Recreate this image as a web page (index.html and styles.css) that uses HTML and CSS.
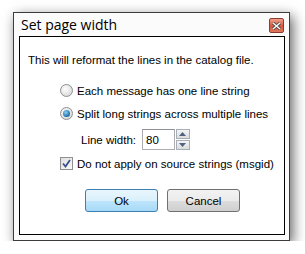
FILE: index.html
```html
<!DOCTYPE html>
<html lang="en">
<head>
    <meta charset="UTF-8">
    <title>Set page width</title>
    <link rel="stylesheet" href="styles.css">
</head>
<body>
    <div class="window">
        <div class="titlebar">
            <span class="title">Set page width</span>
            <span class="close-btn">
                <svg width="9" height="8" viewBox="0 0 9 8">
                    <path d="M1 1 L8 7 M8 1 L1 7" stroke="#4a4a4a" stroke-width="3" />
                    <path d="M1 1 L8 7 M8 1 L1 7" stroke="#ffffff" stroke-width="1.4" />
                </svg>
            </span>
        </div>
        <div class="client">
            <p class="intro">This will reformat the lines in the catalog file.</p>
            <div class="option">
                <span class="radio"></span>
                <span>Each message has one line string</span>
            </div>
            <div class="option">
                <span class="radio checked"></span>
                <span>Split long strings across multiple lines</span>
            </div>
            <div class="width-row">
                <span>Line width:</span>
                <span class="spin-input">80</span>
                <span class="spin-buttons">
                    <span class="spin-btn"><svg width="7" height="4" viewBox="0 0 7 4"><path d="M0 4 L3.5 0 L7 4 Z" fill="#4d6185" /></svg></span>
                    <span class="spin-btn"><svg width="7" height="4" viewBox="0 0 7 4"><path d="M0 0 L3.5 4 L7 0 Z" fill="#4d6185" /></svg></span>
                </span>
            </div>
            <div class="option">
                <span class="checkbox">
                    <svg width="9" height="9" viewBox="0 0 9 9"><path d="M1 4.5 L3.5 7.5 L8 1" fill="none" stroke="#3b4f8c" stroke-width="1.8" /></svg>
                </span>
                <span>Do not apply on source strings (msgid)</span>
            </div>
            <div class="buttons">
                <span class="btn btn-default">Ok</span>
                <span class="btn">Cancel</span>
            </div>
        </div>
    </div>
</body>
</html>
```

FILE: styles.css
```css
body {
    margin: 0;
    background: #ffffff;
    font-family: "Liberation Sans", Arial, sans-serif;
    font-size: 11.5px;
    color: #000000;
}
.window {
    margin: 12px 0 0 13px;
    width: 277px;
    height: 229px;
    box-sizing: border-box;
    border: 1px solid #3c3c3c;
    background: #fbfbfb;
    box-shadow: 3px 4px 12px rgba(0, 0, 0, 0.6);
    display: flex;
    flex-direction: column;
}
.titlebar {
    height: 23px;
    display: flex;
    align-items: center;
    justify-content: space-between;
    padding: 0 5px 0 7px;
}
.title {
    font-family: "Open Sans", sans-serif;
    font-size: 14px;
    color: #000;
}
.close-btn {
    width: 15px;
    height: 15px;
    box-sizing: border-box;
    border: 1px solid #8a3b2e;
    border-radius: 2px;
    background: linear-gradient(#f0a08d, #d4583f 55%, #e0775e);
    display: flex;
    align-items: center;
    justify-content: center;
    margin-top: 2px;
}
.client {
    flex: 1;
    margin: 0 4px 5px 5px;
    border: 1px solid #000000;
    background: #ffffff;
    padding: 16px 0 0 8px;
}
.intro {
    margin: 0 0 15px 0;
    line-height: 15px;
}
.option {
    display: flex;
    align-items: center;
    gap: 4px;
    margin-left: 32px;
    height: 15px;
    margin-bottom: 8px;
}
.radio {
    width: 13px;
    height: 13px;
    box-sizing: border-box;
    border-radius: 50%;
    border: 1px solid #8e8f8f;
    background: radial-gradient(circle at 40% 35%, #ffffff, #d8d8d8 80%);
    display: flex;
    align-items: center;
    justify-content: center;
}
.radio.checked::after {
    content: "";
    width: 7px;
    height: 7px;
    border-radius: 50%;
    background: radial-gradient(circle at 40% 35%, #8ad0f5, #1c6ca6 70%, #0d3e6a);
}
.width-row {
    display: flex;
    align-items: center;
    margin-left: 53px;
    height: 21px;
    margin-bottom: 6px;
}
.spin-input {
    margin-left: 6px;
    width: 33px;
    height: 21px;
    box-sizing: border-box;
    border: 1px solid #abadb3;
    border-top-color: #8e9196;
    padding: 3px 0 0 3px;
    line-height: 14px;
}
.spin-buttons {
    margin-left: 1px;
    display: flex;
    flex-direction: column;
    height: 21px;
}
.spin-btn {
    width: 14px;
    height: 10px;
    box-sizing: border-box;
    border: 1px solid #a8aeb8;
    background: linear-gradient(#f4f4f4, #dcdcdc);
    display: flex;
    align-items: center;
    justify-content: center;
}
.spin-btn + .spin-btn {
    margin-top: 1px;
}
.checkbox {
    width: 13px;
    height: 13px;
    box-sizing: border-box;
    border: 1px solid #8e8f8f;
    background: linear-gradient(135deg, #dedede, #fafafa);
    display: flex;
    align-items: center;
    justify-content: center;
}
.buttons {
    display: flex;
    gap: 9px;
    margin: 18px 0 0 57px;
}
.btn {
    width: 73px;
    height: 23px;
    box-sizing: border-box;
    border: 1px solid #707070;
    border-radius: 3px;
    background: linear-gradient(#f2f2f2 0%, #ebebeb 50%, #dddddd 51%, #cfcfcf 100%);
    display: flex;
    align-items: center;
    justify-content: center;
}
.btn-default {
    border-color: #3c7fb1;
    background: linear-gradient(#eaf6fd 0%, #d9f0fc 50%, #bee6fd 51%, #a7d9f5 100%);
}
```
